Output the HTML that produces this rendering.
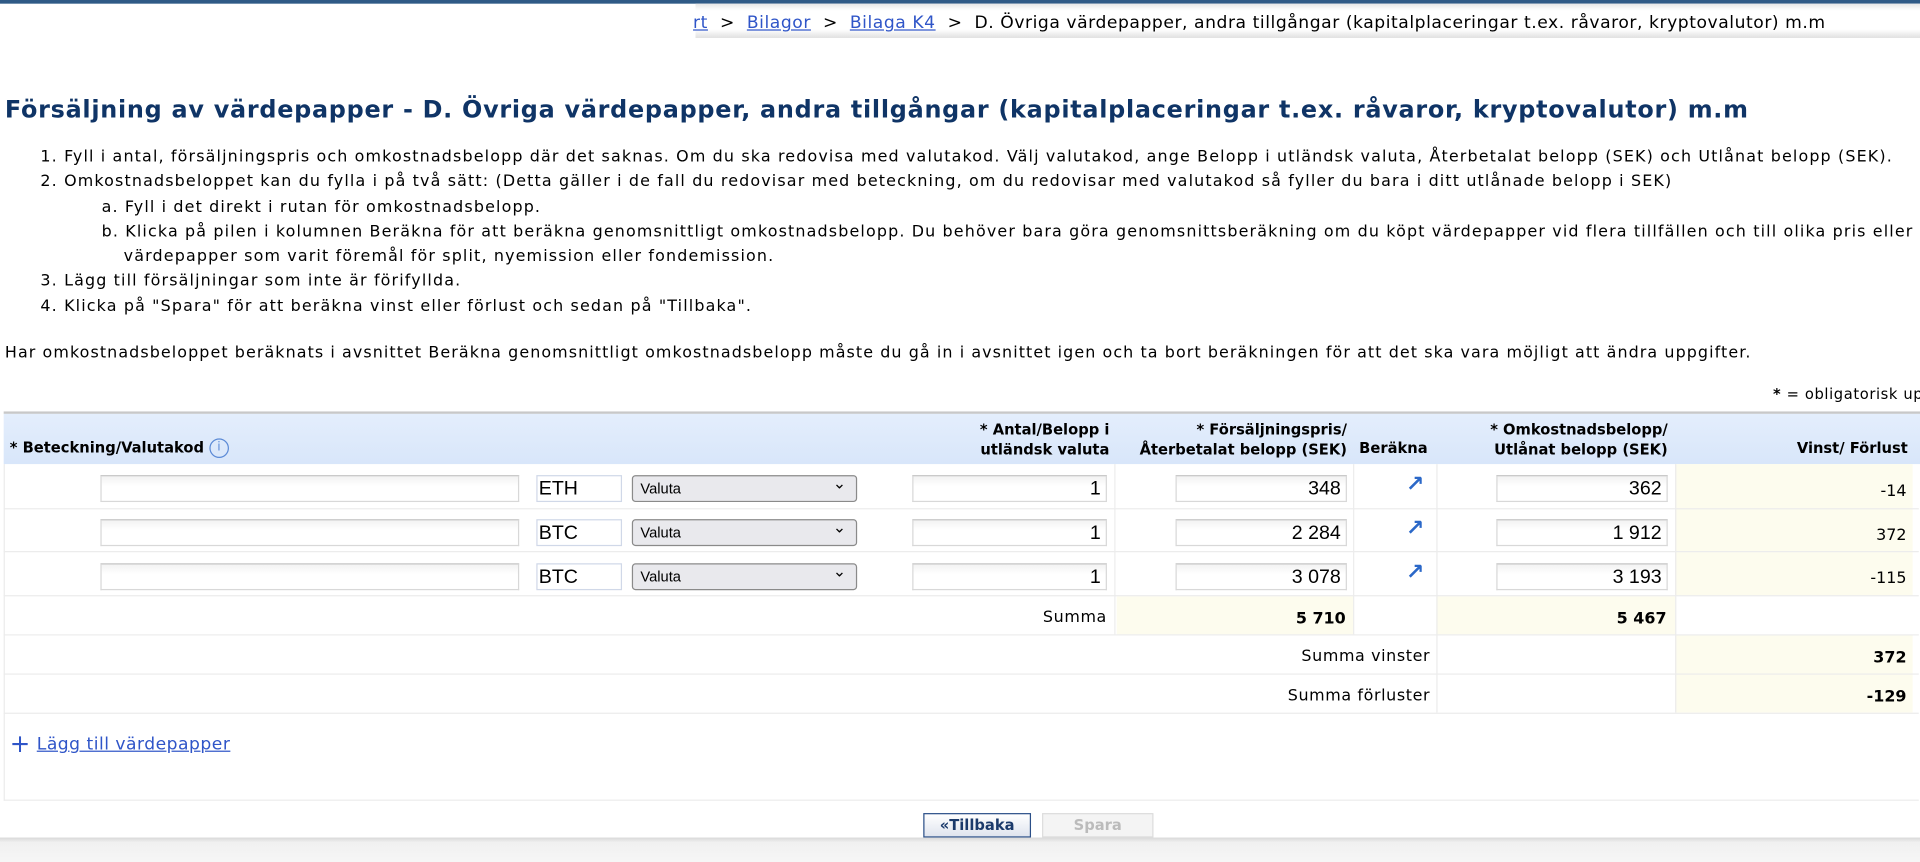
<!DOCTYPE html>
<html><head><meta charset="utf-8"><style>
html,body{margin:0;padding:0;background:#fff;overflow:hidden;width:1920px;height:862px}
#w{position:absolute;left:0;top:0;width:1568px;height:704px;transform:scale(1.22449);transform-origin:0 0;font-family:"DejaVu Sans",Verdana,sans-serif;font-size:13px;color:#000}
.a{position:absolute;white-space:nowrap}
.r{text-align:right}
.b{font-weight:bold}
.inp{position:absolute;height:22px;border:1px solid #d8d8d8;border-top-color:#c4c4c4;background:linear-gradient(#f2f2f2,#fff 40%);box-sizing:border-box;font-size:16px;text-align:right;padding-right:4px;line-height:21px;font-family:"Liberation Sans",sans-serif}
.sel{position:absolute;height:22px;border:1px solid #8a8a8a;border-radius:3px;background:#e9e9ed;box-sizing:border-box;font-size:12px;line-height:20px;padding-left:6px;font-family:"Liberation Sans",sans-serif}
.sel:after{content:"⌄";position:absolute;right:8px;top:-4px;font-size:13px}
.cur{position:absolute;height:22px;width:70px;border:1px solid #d0d8e8;box-sizing:border-box;font-size:16px;line-height:21px;padding-left:1px;font-family:"Liberation Sans",sans-serif}
.arr{position:absolute;color:#2b68c8;font-size:18px;font-weight:bold}
.hl{position:absolute;height:1px;background:#ececec;left:3px;width:1564px}
.vl{position:absolute;width:1px;background:#ececec}
</style></head><body><div id="w">
<div class="a" style="left:0;top:0;width:1568px;height:3px;background:#2f5a86"></div>
<div class="a" style="left:568px;top:3px;width:1000px;height:28px;background:linear-gradient(#e6e6e6,#fff 20%,#fff 75%,#e0e0e0)"></div>
<div class="a" style="left:566px;top:11px;font-size:14px;letter-spacing:0.45px"><span style="color:#2f55c8;text-decoration:underline">rt</span> &nbsp;&gt;&nbsp; <span style="color:#2f55c8;text-decoration:underline">Bilagor</span> &nbsp;&gt;&nbsp; <span style="color:#2f55c8;text-decoration:underline">Bilaga K4</span> &nbsp;&gt;&nbsp; D. Övriga värdepapper, andra tillgångar (kapitalplaceringar t.ex. råvaror, kryptovalutor) m.m</div>
<div class="a b" style="left:4px;top:78px;font-size:19.5px;color:#0f3466;letter-spacing:0.6px">Försäljning av värdepapper - D. Övriga värdepapper, andra tillgångar (kapitalplaceringar t.ex. råvaror, kryptovalutor) m.m</div>
<div class="a" style="left:33px;top:119px;line-height:20.3px;letter-spacing:0.93px">1. Fyll i antal, försäljningspris och omkostnadsbelopp där det saknas. Om du ska redovisa med valutakod. Välj valutakod, ange Belopp i utländsk valuta, Återbetalat belopp (SEK) och Utlånat belopp (SEK).<br>2. Omkostnadsbeloppet kan du fylla i på två sätt: (Detta gäller i de fall du redovisar med beteckning, om du redovisar med valutakod så fyller du bara i ditt utlånade belopp i SEK)<br><span style="padding-left:50px">a. Fyll i det direkt i rutan för omkostnadsbelopp.</span><br><span style="padding-left:50px">b. Klicka på pilen i kolumnen Beräkna för att beräkna genomsnittligt omkostnadsbelopp. Du behöver bara göra genomsnittsberäkning om du köpt värdepapper vid flera tillfällen och till olika pris eller såld</span><br><span style="padding-left:68px">värdepapper som varit föremål för split, nyemission eller fondemission.</span><br>3. Lägg till försäljningar som inte är förifyllda.<br>4. Klicka på "Spara" för att beräkna vinst eller förlust och sedan på "Tillbaka".</div>
<div class="a" style="left:4px;top:281px;letter-spacing:0.88px">Har omkostnadsbeloppet beräknats i avsnittet Beräkna genomsnittligt omkostnadsbelopp måste du gå in i avsnittet igen och ta bort beräkningen för att det ska vara möjligt att ändra uppgifter.</div>
<div class="a" style="left:1448px;top:315px;font-size:12px;letter-spacing:0.5px"><b>*</b> = obligatorisk uppgift</div>
<div class="a" style="left:3px;top:336px;width:1565px;height:2px;background:#c8c8c8"></div>
<div class="a" style="left:3px;top:338px;width:1565px;height:41px;background:linear-gradient(#e4eefc,#d8e6fa)"></div>
<div class="a b" style="left:8px;top:358px;font-size:12px">* Beteckning/Valutakod <span style="display:inline-block;width:16px;height:16px;border:1px solid #5b8ad6;border-radius:50%;box-sizing:border-box;color:#5b8ad6;font-size:10px;text-align:center;line-height:14px;font-weight:normal;vertical-align:middle">i</span></div>
<div class="a b r" style="right:662px;top:343px;font-size:12px;line-height:16px">* Antal/Belopp i<br>utländsk valuta</div>
<div class="a b r" style="right:468px;top:343px;font-size:12px;line-height:16px">* Försäljningspris/<br>Återbetalat belopp (SEK)</div>
<div class="a b" style="left:1110px;top:359px;font-size:12px">Beräkna</div>
<div class="a b r" style="right:206px;top:343px;font-size:12px;line-height:16px">* Omkostnadsbelopp/<br>Utlånat belopp (SEK)</div>
<div class="a b" style="right:10px;top:359px;font-size:12px">Vinst/ Förlust</div>
<div class="a" style="left:1368px;top:379px;width:194px;height:107px;background:#fdfcee"></div>
<div class="a" style="left:912px;top:487px;width:193px;height:31px;background:#fdfcee"></div>
<div class="a" style="left:1173px;top:487px;width:195px;height:31px;background:#fdfcee"></div>
<div class="a" style="left:1368px;top:519px;width:194px;height:63px;background:#fdfcee"></div>
<div class="vl" style="left:910px;top:379px;height:139px"></div>
<div class="vl" style="left:1105px;top:379px;height:139px"></div>
<div class="vl" style="left:1173px;top:379px;height:203px"></div>
<div class="vl" style="left:1368px;top:379px;height:203px"></div>
<div class="vl" style="left:3px;top:379px;height:275px"></div>
<div class="hl" style="top:415px"></div><div class="hl" style="top:450px"></div><div class="hl" style="top:486px"></div><div class="hl" style="top:518px"></div><div class="hl" style="top:550px"></div><div class="hl" style="top:582px"></div><div class="hl" style="top:653px"></div>

<div class="inp" style="left:82px;top:388px;width:342px"></div>
<div class="cur" style="left:438px;top:388px">ETH</div>
<div class="sel" style="left:516px;top:388px;width:184px">Valuta</div>
<div class="inp" style="left:745px;top:388px;width:159px">1</div>
<div class="inp" style="left:960px;top:388px;width:140px">348</div>
<div class="arr" style="left:1148px;top:385px">↗</div>
<div class="inp" style="left:1222px;top:388px;width:140px">362</div>
<div class="a r" style="right:11px;top:394px">-14</div>

<div class="inp" style="left:82px;top:424px;width:342px"></div>
<div class="cur" style="left:438px;top:424px">BTC</div>
<div class="sel" style="left:516px;top:424px;width:184px">Valuta</div>
<div class="inp" style="left:745px;top:424px;width:159px">1</div>
<div class="inp" style="left:960px;top:424px;width:140px">2 284</div>
<div class="arr" style="left:1148px;top:421px">↗</div>
<div class="inp" style="left:1222px;top:424px;width:140px">1 912</div>
<div class="a r" style="right:11px;top:430px">372</div>

<div class="inp" style="left:82px;top:460px;width:342px"></div>
<div class="cur" style="left:438px;top:460px">BTC</div>
<div class="sel" style="left:516px;top:460px;width:184px">Valuta</div>
<div class="inp" style="left:745px;top:460px;width:159px">1</div>
<div class="inp" style="left:960px;top:460px;width:140px">3 078</div>
<div class="arr" style="left:1148px;top:457px">↗</div>
<div class="inp" style="left:1222px;top:460px;width:140px">3 193</div>
<div class="a r" style="right:11px;top:465px">-115</div>

<div class="a r" style="right:664px;top:497px;letter-spacing:0.5px">Summa</div>
<div class="a b r" style="right:469px;top:498px">5 710</div>
<div class="a b r" style="right:207px;top:498px">5 467</div>
<div class="a r" style="right:400px;top:529px;letter-spacing:0.5px">Summa vinster</div>
<div class="a b r" style="right:11px;top:530px">372</div>
<div class="a r" style="right:400px;top:561px;letter-spacing:0.5px">Summa förluster</div>
<div class="a b r" style="right:11px;top:562px">-129</div>

<div class="a" style="left:8px;top:600px;color:#2f55c8;font-size:14px;letter-spacing:0.4px"><span style="font-size:20px;line-height:14px;vertical-align:-2px">+</span> <span style="text-decoration:underline">Lägg till värdepapper</span></div>

<div class="a b" style="left:754px;top:664px;width:88px;height:20px;box-sizing:border-box;border:1px solid #2b4f88;background:linear-gradient(#fff,#dfe4ee);color:#1b3a6b;font-size:12px;text-align:center;line-height:18px">«Tillbaka</div>
<div class="a b" style="left:851px;top:664px;width:91px;height:20px;box-sizing:border-box;border:1px solid #ddd;background:#f4f4f4;color:#bbb;font-size:12px;text-align:center;line-height:18px">Spara</div>
<div class="a" style="left:0;top:684px;width:1568px;height:20px;background:linear-gradient(#d8d8d8,#f0f0f0 20%,#f6f6f6)"></div>
</div></body></html>
